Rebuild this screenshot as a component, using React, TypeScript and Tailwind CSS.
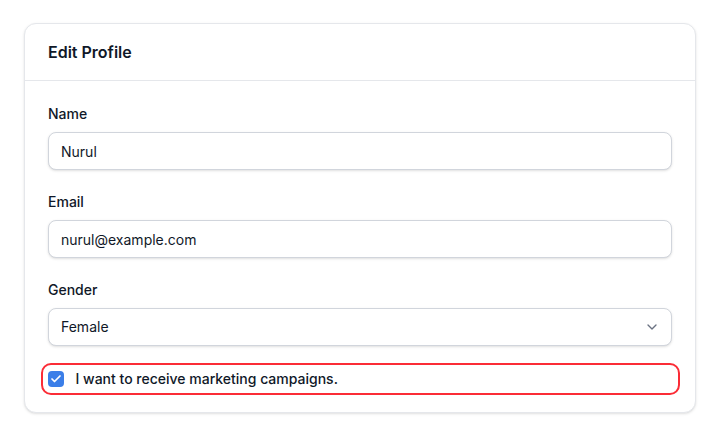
import React, { useState } from 'react'
import { ChevronDown, Check } from 'lucide-react'

const fields = [
  { id: 'name', label: 'Name' },
  { id: 'email', label: 'Email' },
]

export default function App() {
  const [name, setName] = useState('Nurul')
  const [email, setEmail] = useState('nurul@example.com')
  const [gender, setGender] = useState('Female')
  const [marketing, setMarketing] = useState(true)

  const values: Record<string, [string, (v: string) => void]> = {
    name: [name, setName],
    email: [email, setEmail],
  }

  return (
    <div className="bg-white pt-[23px] pb-6 px-6 font-['Inter',sans-serif] text-gray-900">
      <div className="rounded-xl border border-gray-200 bg-white shadow-sm">
        <div className="flex h-[57px] items-center border-b border-gray-200 px-[23px]">
          <h3 className="text-base font-semibold leading-6">Edit Profile</h3>
        </div>

        <div className="flex flex-col gap-[22px] px-[23px] pt-[23px]">
          {fields.map((f) => (
            <div key={f.id} className="flex flex-col gap-2">
              <label htmlFor={f.id} className="text-sm font-medium leading-5">
                {f.label}
              </label>
              <input
                id={f.id}
                type="text"
                value={values[f.id][0]}
                onChange={(e) => values[f.id][1](e.target.value)}
                className="h-[38px] w-full rounded-lg border border-gray-300 bg-white px-3 text-sm shadow-sm outline-none"
              />
            </div>
          ))}

          <div className="flex flex-col gap-2">
            <label htmlFor="gender" className="text-sm font-medium leading-5">
              Gender
            </label>
            <div className="relative">
              <select
                id="gender"
                value={gender}
                onChange={(e) => setGender(e.target.value)}
                className="h-[38px] w-full appearance-none rounded-lg border border-gray-300 bg-white px-3 text-sm shadow-sm outline-none"
              >
                <option>Female</option>
                <option>Male</option>
                <option>Other</option>
              </select>
              <ChevronDown className="pointer-events-none absolute right-3 top-1/2 size-4 -translate-y-1/2 text-gray-500" strokeWidth={2} />
            </div>
          </div>
        </div>

        <div className="px-[23px] pb-[17px] pt-[17px]">
          <label className="-ml-[7px] -mr-2 flex h-[32px] cursor-pointer items-center gap-3 rounded-[10px] border-[2.5px] border-red-500 pl-[4.5px]">
            <span
              onClick={() => setMarketing(!marketing)}
              className={`flex size-4 items-center justify-center rounded-[4px] ${marketing ? 'bg-[#3b7ee8]' : 'border border-gray-300 bg-white'}`}
            >
              {marketing && <Check className="size-3 text-white" strokeWidth={3.5} />}
            </span>
            <span className="text-sm font-medium leading-5">I want to receive marketing campaigns.</span>
          </label>
        </div>
      </div>
    </div>
  )
}
